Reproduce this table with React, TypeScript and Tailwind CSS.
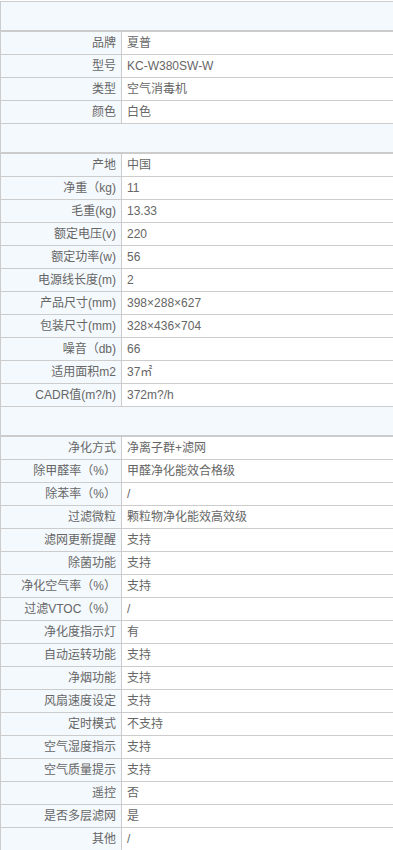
type Row = [string, string];

const sections: Row[][] = [
  [
    ['品牌', '夏普'],
    ['型号', 'KC-W380SW-W'],
    ['类型', '空气消毒机'],
    ['颜色', '白色'],
  ],
  [
    ['产地', '中国'],
    ['净重（kg)', '11'],
    ['毛重(kg)', '13.33'],
    ['额定电压(v)', '220'],
    ['额定功率(w)', '56'],
    ['电源线长度(m)', '2'],
    ['产品尺寸(mm)', '398×288×627'],
    ['包装尺寸(mm)', '328×436×704'],
    ['噪音（db)', '66'],
    ['适用面积m2', '37㎡'],
    ['CADR值(m?/h)', '372m?/h'],
  ],
  [
    ['净化方式', '净离子群+滤网'],
    ['除甲醛率（%）', '甲醛净化能效合格级'],
    ['除苯率（%）', '/'],
    ['过滤微粒', '颗粒物净化能效高效级'],
    ['滤网更新提醒', '支持'],
    ['除菌功能', '支持'],
    ['净化空气率（%）', '支持'],
    ['过滤VTOC（%）', '/'],
    ['净化度指示灯', '有'],
    ['自动运转功能', '支持'],
    ['净烟功能', '支持'],
    ['风扇速度设定', '支持'],
    ['定时模式', '不支持'],
    ['空气湿度指示', '支持'],
    ['空气质量提示', '支持'],
    ['遥控', '否'],
    ['是否多层滤网', '是'],
    ['其他', '/'],
  ],
];

function SpecRow({ label, value }: { label: string; value: string }) {
  return (
    <div className="flex h-[23px] border-b border-[#cccccc]">
      <div className="w-[121px] shrink-0 bg-[#f4f9fd] border-r border-[#cccccc] pr-[5px] text-right leading-[22px] whitespace-nowrap">
        {label}
      </div>
      <div className="flex-1 pl-[5px] leading-[22px] whitespace-nowrap">{value}</div>
    </div>
  );
}

export default function App() {
  return (
    <div
      className="w-[393px] h-[850px] overflow-hidden bg-white pt-px text-[12px] text-[#666666]"
      style={{ fontFamily: '"Liberation Sans", "Noto Sans CJK SC", sans-serif' }}
    >
      <div className="border-t border-l border-[#cccccc]">
        {sections.map((rows, i) => (
          <div key={i}>
            {/* section heading band */}
            <div className="h-[30px] bg-[#f4f9fd] border-b-2 border-[#cccccc]" />
            {rows.map(([label, value]) => (
              <SpecRow key={label} label={label} value={value} />
            ))}
          </div>
        ))}
      </div>
    </div>
  );
}
